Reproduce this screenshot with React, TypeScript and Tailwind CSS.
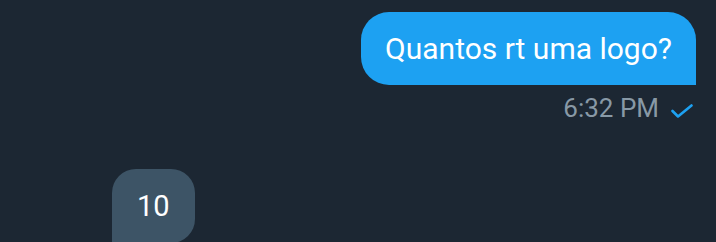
import React from 'react'

const App = () => {
  return (
    <div
      className="w-[716px] h-[242px] overflow-hidden bg-[#1c2733] pt-[12px]"
      style={{ fontFamily: 'Roboto, "Noto Sans", sans-serif' }}
    >
      {/* Sent message */}
      <div className="flex flex-col items-end pr-[20px]">
        <div className="h-[73px] flex items-center px-[24px] bg-[#1da1f2] rounded-[28px] rounded-br-none text-white text-[30px] leading-none">
          Quantos rt uma logo?
        </div>
        <div className="flex items-center gap-[12px] mt-[7px] pr-[3px]">
          <span className="text-[#8899a6] text-[26px] leading-[32px]">6:32 PM</span>
          <svg width="22" height="14" viewBox="0 0 22 14" className="mt-[5px]">
            <path d="M1.5 7 L7 12.5 L20.5 1.5" fill="none" stroke="#1da1f2" strokeWidth="2.6" strokeLinecap="round" strokeLinejoin="round" />
          </svg>
        </div>
      </div>

      {/* Received message */}
      <div className="flex pl-[112px] mt-[45px]">
        <div className="h-[74px] flex items-center px-[25px] bg-[#3d5466] rounded-[24px] rounded-bl-none text-white text-[29px] leading-none">
          10
        </div>
      </div>
    </div>
  )
}

export default App
